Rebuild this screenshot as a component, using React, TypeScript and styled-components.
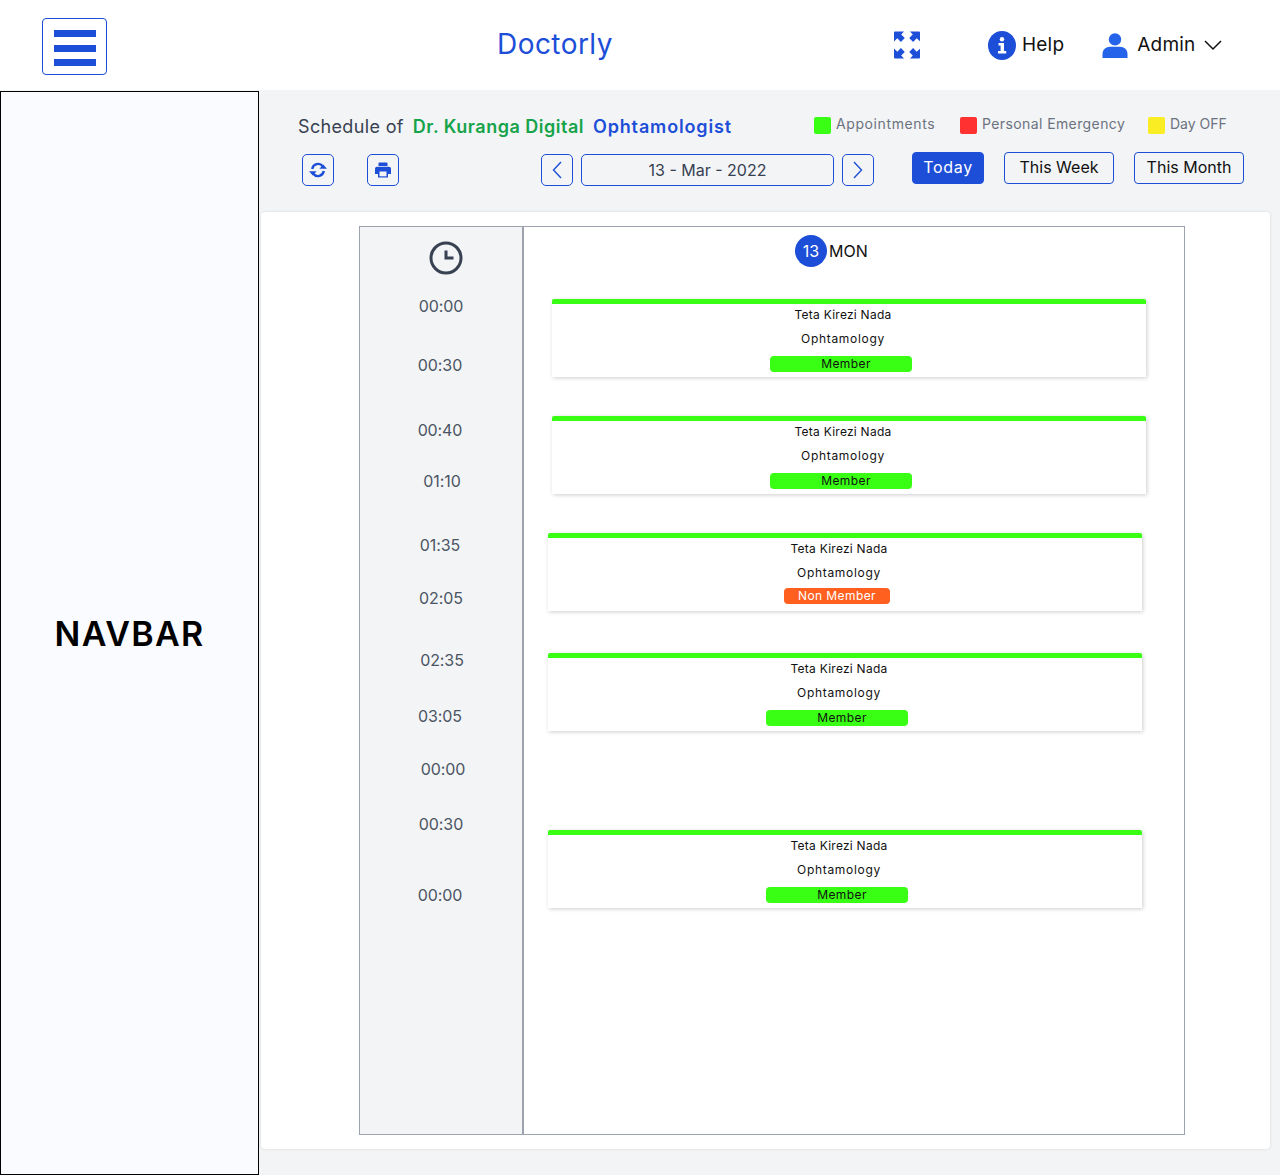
import React from 'react';
import styled, {createGlobalStyle} from 'styled-components';

const FONT = '"Inter", "Liberation Sans", sans-serif';

const GlobalStyle = createGlobalStyle`
  html, body {
    margin: 0;
    padding: 0;
    background: #f3f4f6;
    font-family: ${FONT};
  }
  * {
    box-sizing: border-box;
  }
`;

const times = [
    {label: '00:00', gap: 0, shift: 1},
    {label: '00:30', gap: 35, shift: 0},
    {label: '00:40', gap: 41, shift: 0},
    {label: '01:10', gap: 27, shift: 2},
    {label: '01:35', gap: 40, shift: 0},
    {label: '02:05', gap: 29, shift: 1},
    {label: '02:35', gap: 38, shift: 2},
    {label: '03:05', gap: 32, shift: 0},
    {label: '00:00', gap: 29, shift: 3},
    {label: '00:30', gap: 31, shift: 1},
    {label: '00:00', gap: 47, shift: 0}
];

const visits = [
    {gap: 32, left: 28, member: true},
    {gap: 39, left: 28, member: true},
    {gap: 39, left: 24, member: false},
    {gap: 42, left: 24, member: true},
    {gap: 99, left: 24, member: true}
];

const ExpandIcon = () => (
    <svg width="28" height="28" viewBox="0 0 28 28" fill="#1d4ed8">
        <path d="M1 1.5a1 1 0 0 1 1-1h9L8.2 3.4l3.6 3.6-3.9 3.9-3.6-3.6L1 10.4z"/>
        <path d="M27 1.5a1 1 0 0 0-1-1h-9l2.8 2.9-3.6 3.6 3.9 3.9 3.6-3.6 3.3 3z"/>
        <path d="M1 26.5a1 1 0 0 0 1 1h9l-2.8-2.9 3.6-3.6-3.9-3.9-3.6 3.6L1 17.6z"/>
        <path d="M27 26.5a1 1 0 0 1-1 1h-9l2.8-2.9-3.6-3.6 3.9-3.9 3.6 3.6 3.3-3z"/>
    </svg>
);

const InfoIcon = () => (
    <svg width="28" height="29" viewBox="0 0 28 29">
        <ellipse cx="14" cy="14.5" rx="14" ry="14.5" fill="#1d4ed8"/>
        <circle cx="14" cy="8.2" r="2.2" fill="#fff"/>
        <path d="M10.5 12h5.5v8h2.2v2.4H10v-2.4h2.6v-5.6h-2.1z" fill="#fff"/>
    </svg>
);

const PersonIcon = () => (
    <svg width="26" height="25" viewBox="0 0 26 25" fill="#2563eb">
        <circle cx="13" cy="6.4" r="6.2"/>
        <path d="M0.5 25v-4c0-4.2 3.4-7.2 7.5-7.2h10c4.1 0 7.5 3 7.5 7.2v4z"/>
    </svg>
);

const ChevronDown = () => (
    <svg width="18" height="11" viewBox="0 0 18 11" fill="none" stroke="#111" strokeWidth="1.5">
        <path d="M1 1l8 8 8-8"/>
    </svg>
);

const SyncIcon = () => (
    <svg width="18" height="18" viewBox="0 0 18 18" fill="none" stroke="#1d4ed8" strokeWidth="2.4">
        <path d="M3.2 8A6 6 0 0 1 13.8 5.2"/>
        <path d="M14.8 10A6 6 0 0 1 4.2 12.8"/>
        <path d="M10.4 7.8H18L14.2 3.4z" fill="#1d4ed8" stroke="none"/>
        <path d="M7.6 10.2H0L3.8 14.6z" fill="#1d4ed8" stroke="none"/>
    </svg>
);

const PrintIcon = () => (
    <svg width="16" height="16" viewBox="0 0 16 16">
        <path d="M3.5 1.500A1 1 0 0 1 4.5 .5h7a1 1 0 0 1 1 1V4h-9z" fill="#1d4ed8"/>
        <path d="M0 6.500A2 2 0 0 1 2 4.700h12a2 2 0 0 1 2 1.800V12h-3v3.500H3V12H0z" fill="#1d4ed8"/>
        <rect x="4.500" y="9.500" width="7" height="4.800" fill="#f3f4f6"/>
    </svg>
);

const ClockIcon = () => (
    <svg width="34" height="34" viewBox="0 0 34 34" fill="none" stroke="#374151" strokeWidth="3">
        <circle cx="17" cy="17" r="15"/>
        <path d="M17 9.5V17h7.5"/>
    </svg>
);

const Chevron = ({dir}: {dir: 'left' | 'right'}) => (
    <svg width="10" height="18" viewBox="0 0 10 18" fill="none" stroke="#1d4ed8" strokeWidth="1.4">
        <path d={dir === 'left' ? 'M9 1 1.5 9 9 17' : 'M1 1l7.5 8L1 17'}/>
    </svg>
);

const App = (): JSX.Element => (
    <Page>
        <GlobalStyle/>
        <Header>
            <MenuButton>
                <MenuBar/>
                <MenuBar/>
                <MenuBar/>
            </MenuButton>
            <Brand>Doctorly</Brand>
            <ExpandSlot><ExpandIcon/></ExpandSlot>
            <HelpSlot>
                <InfoIcon/>
                <HeaderText>Help</HeaderText>
            </HelpSlot>
            <AdminSlot>
                <PersonIcon/>
                <HeaderText>Admin</HeaderText>
                <ChevronDown/>
            </AdminSlot>
        </Header>
        <Body>
            <Navbar>NAVBAR</Navbar>
            <Main>
                <TitleRow>
                    <TitleGroup>
                        <ScheduleOf>Schedule of</ScheduleOf>
                        <DoctorName>Dr. Kuranga Digital</DoctorName>
                        <Speciality>Ophtamologist</Speciality>
                    </TitleGroup>
                    <Legend>
                        <LegendItem $width={146}>
                            <Swatch $color="#39ff14"/>
                            <LegendLabel $spacing={0.6}>Appointments</LegendLabel>
                        </LegendItem>
                        <LegendItem $width={188}>
                            <Swatch $color="#ff3131"/>
                            <LegendLabel $spacing={0.4}>Personal Emergency</LegendLabel>
                        </LegendItem>
                        <LegendItem $width={90}>
                            <Swatch $color="#fbed23"/>
                            <LegendLabel $spacing={0}>Day OFF</LegendLabel>
                        </LegendItem>
                    </Legend>
                </TitleRow>
                <ToolRow>
                    <IconButton><SyncIcon/></IconButton>
                    <IconButton $ml={33}><PrintIcon/></IconButton>
                    <IconButton $ml={142}><Chevron dir="left"/></IconButton>
                    <DateBox>13 - Mar - 2022</DateBox>
                    <IconButton $ml={8}><Chevron dir="right"/></IconButton>
                    <RangeButton $active $width={72} $ml={38}>Today</RangeButton>
                    <RangeButton $width={110} $ml={20}>This Week</RangeButton>
                    <RangeButton $width={110} $ml={20}>This Month</RangeButton>
                </ToolRow>
                <Card>
                    <Calendar>
                        <TimeColumn>
                            <ClockSlot><ClockIcon/></ClockSlot>
                            {times.map((t, i) => (
                                <TimeLabel key={i} $gap={t.gap} $shift={t.shift}>{t.label}</TimeLabel>
                            ))}
                        </TimeColumn>
                        <DayColumn>
                            <DayHeading>
                                <DayNumber>13</DayNumber>
                                <DayName>MON</DayName>
                            </DayHeading>
                            {visits.map((v, i) => (
                                <Visit key={i} $gap={v.gap} $left={v.left}>
                                    <PatientName>Teta Kirezi Nada</PatientName>
                                    <Department>Ophtamology</Department>
                                    <Badge $member={v.member}>
                                        {v.member ? 'Member' : 'Non Member'}
                                    </Badge>
                                </Visit>
                            ))}
                        </DayColumn>
                    </Calendar>
                </Card>
            </Main>
        </Body>
    </Page>
);

const Page = styled.div`
  width: 1280px;
  height: 1175px;
  overflow: hidden;
  background: #f3f4f6;
`;

const Header = styled.header`
  height: 90px;
  background: #fff;
  display: flex;
  align-items: center;
  padding-left: 42px;
`;

const MenuButton = styled.div`
  width: 65px;
  height: 57px;
  border: 1px solid #1d4ed8;
  border-radius: 4px;
  margin-top: 3px;
  display: flex;
  flex-direction: column;
  align-items: center;
  gap: 7.6px;
  padding: 11px 0 0 1px;
`;

const MenuBar = styled.span`
  width: 42px;
  height: 7px;
  background: #1d4ed8;
`;

const Brand = styled.div`
  width: 200px;
  margin-left: 390px;
  margin-top: -2px;
  font-size: 28px;
  letter-spacing: 0.45px;
  color: #1d4ed8;
`;

const ExpandSlot = styled.div`
  margin-left: 196px;
  height: 28px;
`;

const HelpSlot = styled.div`
  margin-left: 67px;
  display: flex;
  align-items: center;
  gap: 6px;
`;

const HeaderText = styled.span`
  font-size: 19px;
  line-height: 26px;
  letter-spacing: 0.2px;
  color: #111;
`;

const AdminSlot = styled.div`
  margin-left: 38px;
  display: flex;
  align-items: center;
  gap: 9px;
`;

const Body = styled.div`
  display: flex;
  height: 1085px;
`;

const Navbar = styled.aside`
  width: 259px;
  margin-top: 1px;
  border: 1px solid #000;
  background: #f9fbff;
  display: flex;
  align-items: center;
  justify-content: center;
  font-size: 34px;
  font-weight: 600;
  letter-spacing: 1.3px;
  color: #000;
`;

const Main = styled.main`
  width: 1011px;
  margin-left: 2px;
`;

const TitleRow = styled.div`
  height: 62px;
  display: flex;
  padding: 24px 0 0 37px;
`;

const TitleGroup = styled.div`
  width: 516px;
  display: flex;
  gap: 9px;
  font-size: 18px;
  line-height: 26px;
`;

const ScheduleOf = styled.span`
  color: #374151;
  letter-spacing: 0.35px;
`;

const DoctorName = styled.span`
  color: #16a34a;
  font-weight: 600;
  letter-spacing: 0.5px;
`;

const Speciality = styled.span`
  color: #1d4ed8;
  font-weight: 600;
  letter-spacing: 0.85px;
`;

const Legend = styled.div`
  display: flex;
  margin-top: 2px;
`;

const LegendItem = styled.div<{$width: number}>`
  width: ${(props) => props.$width}px;
  height: 18px;
  display: flex;
  align-items: center;
  gap: 5px;
  font-size: 14px;
  color: #6b7280;
`;

const LegendLabel = styled.span<{$spacing: number}>`
  margin-top: -4px;
  letter-spacing: ${(props) => props.$spacing}px;
`;

const Swatch = styled.span<{$color: string}>`
  width: 17px;
  height: 17px;
  border-radius: 2px;
  background: ${(props) => props.$color};
`;

const ToolRow = styled.div`
  height: 60px;
  display: flex;
  align-items: flex-start;
  padding-left: 41px;
`;

const IconButton = styled.div<{$ml?: number}>`
  width: 32px;
  height: 32px;
  margin: 2px 0 0 ${(props) => props.$ml || 0}px;
  border: 1px solid #1d4ed8;
  border-radius: 5px;
  display: flex;
  align-items: center;
  justify-content: center;
`;

const DateBox = styled.div`
  width: 253px;
  height: 32px;
  margin: 2px 0 0 8px;
  border: 1px solid #1d4ed8;
  border-radius: 5px;
  display: flex;
  align-items: center;
  justify-content: center;
  font-size: 16px;
  color: #374151;
`;

const RangeButton = styled.div<{$active?: boolean; $width: number; $ml: number}>`
  width: ${(props) => props.$width}px;
  height: 32px;
  margin-left: ${(props) => props.$ml}px;
  padding-bottom: 2px;
  border: 1px solid #1d4ed8;
  border-radius: 4px;
  background: ${(props) => props.$active ? '#1d4ed8' : 'transparent'};
  color: ${(props) => props.$active ? '#fff' : '#111'};
  letter-spacing: ${(props) => props.$active ? '0.7px' : '0'};
  display: flex;
  align-items: center;
  justify-content: center;
  font-size: 16px;
`;

const Card = styled.section`
  width: 1009px;
  height: 937px;
  background: #fff;
  border-radius: 4px;
  box-shadow: 0 0 3px rgba(0, 0, 0, 0.12);
  padding: 14px 0 0 98px;
`;

const Calendar = styled.div`
  width: 826px;
  height: 909px;
  border: 1px solid #9ca3af;
  display: flex;
`;

const TimeColumn = styled.div`
  width: 164px;
  background: #f3f4f6;
  border-right: 2px solid #9ca3af;
`;

const ClockSlot = styled.div`
  height: 67px;
  padding: 14px 0 0 69px;
`;

const TimeLabel = styled.div<{$gap: number; $shift: number}>`
  width: 160px;
  height: 24px;
  margin: ${(props) => props.$gap}px 0 0 ${(props) => props.$shift}px;
  text-align: center;
  font-size: 16px;
  line-height: 24px;
  letter-spacing: -0.1px;
  color: #4b5563;
`;

const DayColumn = styled.div`
  flex: 1;
`;

const DayHeading = styled.div`
  height: 40px;
  padding-top: 8px;
  padding-left: 271px;
  display: flex;
  align-items: center;
  gap: 2px;
`;

const DayNumber = styled.span`
  width: 32px;
  height: 32px;
  border-radius: 50%;
  background: #1d4ed8;
  color: #fff;
  font-size: 16px;
  display: flex;
  align-items: center;
  justify-content: center;
`;

const DayName = styled.span`
  font-size: 16px;
  color: #111;
`;

const Visit = styled.article<{$gap: number; $left: number}>`
  width: 594px;
  height: 78px;
  margin: ${(props) => props.$gap}px 0 0 ${(props) => props.$left}px;
  border-top: 5px solid #39ff14;
  border-radius: 2px 2px 0 0;
  box-shadow: 1px 1px 4px rgba(0, 0, 0, 0.2);
  background: #fff;
  display: flex;
  flex-direction: column;
  align-items: center;
  font-size: 12px;
  color: #111;
`;

const PatientName = styled.div`
  height: 24px;
  line-height: 22px;
  margin-left: -12px;
  letter-spacing: 0.25px;
`;

const Department = styled.div`
  height: 24px;
  line-height: 22px;
  margin-left: -12px;
  letter-spacing: 0.7px;
`;

const Badge = styled.div<{$member: boolean}>`
  width: ${(props) => props.$member ? '142px' : '106px'};
  height: 16px;
  margin-top: ${(props) => props.$member ? '4px' : '2px'};
  margin-left: -16px;
  padding-left: ${(props) => props.$member ? '10px' : '0'};
  border-radius: 4px;
  background: ${(props) => props.$member ? '#39ff14' : '#ff5f1f'};
  color: ${(props) => props.$member ? '#111' : '#fff'};
  letter-spacing: 0.4px;
  text-align: center;
  line-height: 16px;
`;

export default App;
